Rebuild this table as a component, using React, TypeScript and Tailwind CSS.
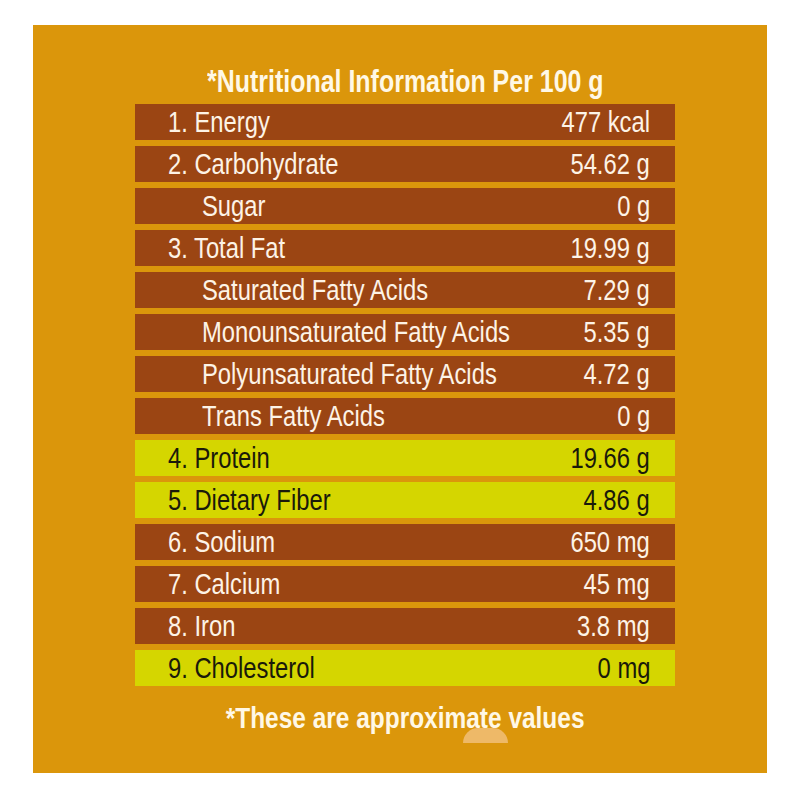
const ROWS = [
  { label: '1. Energy', value: '477 kcal' },
  { label: '2. Carbohydrate', value: '54.62 g' },
  { label: 'Sugar', value: '0 g', sub: true },
  { label: '3. Total Fat', value: '19.99 g' },
  { label: 'Saturated Fatty Acids', value: '7.29 g', sub: true },
  { label: 'Monounsaturated Fatty Acids', value: '5.35 g', sub: true },
  { label: 'Polyunsaturated Fatty Acids', value: '4.72 g', sub: true },
  { label: 'Trans Fatty Acids', value: '0 g', sub: true },
  { label: '4. Protein', value: '19.66 g', hi: true },
  { label: '5. Dietary Fiber', value: '4.86 g', hi: true },
  { label: '6. Sodium', value: '650 mg' },
  { label: '7. Calcium', value: '45 mg' },
  { label: '8. Iron', value: '3.8 mg' },
  { label: '9. Cholesterol', value: '0 mg', hi: true },
];

// condensed look: Arial metrics squeezed horizontally
const font = { fontFamily: '"Liberation Sans", Arial, sans-serif' };

export default function App() {
  return (
    <div className="w-[800px] h-[800px] bg-white pt-[25px] pl-[33px]" style={font}>
      <div className="relative w-[734px] h-[748px] bg-[#db960b] flex flex-col pl-[102px]">
        <h1 className="w-[540px] mt-[35px] h-[44px] flex justify-center text-[31px] leading-[44px] font-bold text-[#fff8e6]">
          <span className="inline-block whitespace-nowrap scale-x-[0.805]">*Nutritional Information Per 100 g</span>
        </h1>
        <div className="w-[540px] flex flex-col gap-[6px]">
          {ROWS.map(r => (
            <div
              key={r.label}
              className={`h-[36px] flex items-center pr-[25px] text-[29px] leading-none whitespace-nowrap ${
                r.hi ? 'bg-[#d5d600] text-[#1a1a0a]' : 'bg-[#9b4513] text-[#fdf3e6]'
              } ${r.sub ? 'pl-[67px]' : 'pl-[33px]'}`}
            >
              <div className="flex-1 min-w-0">
                <span className="inline-block origin-left scale-x-[0.82]">{r.label}</span>
              </div>
              <span className="inline-block origin-right scale-x-[0.82]">{r.value}</span>
            </div>
          ))}
        </div>
        <p className="w-[540px] mt-[12px] flex justify-center text-[30px] leading-[40px] font-bold text-[#fff8e6]">
          <span className="inline-block whitespace-nowrap scale-x-[0.815]">*These are approximate values</span>
        </p>
        <div className="absolute left-[430px] top-[703px] w-[45px] h-[15px] bg-[#eeb968] rounded-t-[22px]" />
      </div>
    </div>
  );
}
